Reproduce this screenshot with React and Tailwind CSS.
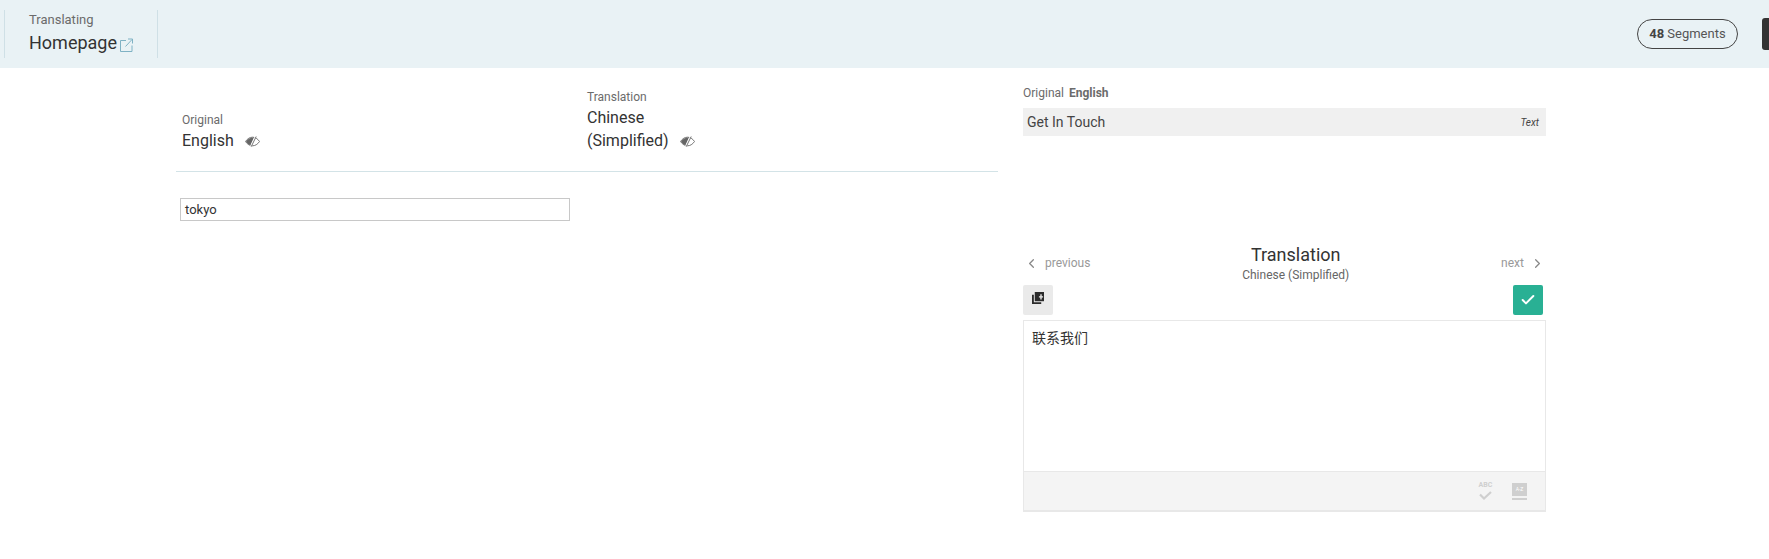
import React from "react";
import { Check, ChevronLeft, ChevronRight } from "lucide-react";

const font = { fontFamily: 'Roboto, "Noto Sans CJK SC", sans-serif' };

function ExternalIcon() {
  return (
    <svg width="13" height="14" viewBox="0 0 13 14" fill="none" stroke="#7fb2c4" strokeWidth="1" className="ml-[3px] mt-[4px]">
      <path d="M6 2.5H0.5V13.5H12V7.5" />
      <path d="M5.5 8.5L12 1.5M8 1H12.5V5.5" />
    </svg>
  );
}

function EyeIcon() {
  return (
    <svg width="15" height="11" viewBox="0 0 15 11" className="ml-[11px] mt-[1px]">
      <path d="M0.5 5.5C2.5 2.5 5 1.2 7.5 1.2C10 1.2 12.5 2.5 14.5 5.5C12.5 8.5 10 9.8 7.5 9.8C5 9.8 2.5 8.5 0.5 5.5Z" fill="none" stroke="#777" strokeWidth="1" />
      <path d="M1 5.5C3 2.8 5.5 1.5 9 1.6L5.5 9.3C3.8 8.7 2.3 7.4 1 5.5Z" fill="#666" />
      <path d="M10.5 0.3L5.5 10.7" stroke="#fff" strokeWidth="1.2" />
      <path d="M11.2 0.5L6.2 10.7" stroke="#777" strokeWidth="1" />
    </svg>
  );
}

function CopyIcon() {
  return (
    <svg width="12" height="12" viewBox="0 0 13 13" className="mt-[-4px]">
      <path d="M0 3H2V11H10V13H0Z" fill="#2b2b2b" />
      <path d="M3 0H13V10H3Z" fill="#2b2b2b" />
      <path d="M7.5 4.5H9V2.5H10.5V4.5H12V6H10.5V8H9V6H7.5Z" fill="#eaeaea" />
    </svg>
  );
}

function SpellIcon() {
  return (
    <div className="flex w-[15px] flex-col items-center text-[#cfcfcf]">
      <span className="text-[7px] font-bold leading-[7px]">ABC</span>
      <svg width="13" height="9" viewBox="0 0 13 9" fill="none" stroke="#cfcfcf" strokeWidth="2.2" className="mt-[2px]">
        <path d="M1 3.5L5 7.5L12 1" />
      </svg>
    </div>
  );
}

function DictIcon() {
  return (
    <div className="flex h-[17px] w-[15px] flex-col bg-[#cfcfcf]">
      <span className="h-[12px] text-center text-[5px] leading-[12px] text-white">A-Z</span>
      <span className="mt-[1px] h-[2px] bg-[#f3f3f3]" />
    </div>
  );
}

export default function App() {
  return (
    <div style={font} className="h-[559px] w-[1769px] overflow-hidden bg-white text-[#333]">
      <header className="flex h-[68px] items-center justify-between bg-[#e9f2f5]">
        <div className="ml-[4px] flex h-[48px] w-[154px] flex-col border-x border-[#cfe0e6] pl-[24px]">
          <span className="text-[13px] leading-[20px] text-[#6b6b6b]">Translating</span>
          <div className="mt-[1px] flex items-center">
            <span className="text-[18px] font-[450] leading-[24px] text-[#333]">Homepage</span>
            <ExternalIcon />
          </div>
        </div>
        <div className="flex items-center">
          <div className="flex h-[30px] w-[101px] items-center justify-center rounded-full border border-[#444] text-[13px] text-[#555]">
            <b className="mr-[3px] font-bold text-[#444]">48</b>Segments
          </div>
          <div className="ml-[24px] h-[32px] w-[7px] rounded-l-[3px] bg-[#333]" />
        </div>
      </header>

      <main className="flex items-start pl-[176px]">
        <section className="w-[822px]">
          <div className="flex h-[104px] items-end border-b border-[#d3e3e7] pb-[19px]">
            <div className="w-[405px] pl-[6px]">
              <div className="text-[12px] leading-[16px] text-[#6b6b6b]">Original</div>
              <div className="mt-[1px] flex items-center text-[16px] font-[450] leading-[23px] text-[#333]">
                English
                <EyeIcon />
              </div>
            </div>
            <div className="w-[405px] pl-[6px]">
              <div className="text-[12px] leading-[16px] text-[#6b6b6b]">Translation</div>
              <div className="mt-[1px] text-[16px] font-[450] leading-[23px] text-[#333]">Chinese</div>
              <div className="flex items-center text-[16px] font-[450] leading-[23px] text-[#333]">
                (Simplified)
                <EyeIcon />
              </div>
            </div>
          </div>
          <div className="pl-[4px] pt-[26px]">
            <div className="flex h-[23px] w-[390px] items-center border border-[#c8c8c8] pl-[4px] text-[13px] text-[#333]">
              tokyo
            </div>
          </div>
        </section>

        <section className="ml-[25px] w-[523px]">
          <div className="flex h-[40px] items-end pb-[7px] text-[12px] leading-[16px] text-[#6b6b6b]">
            Original<b className="ml-[5px] font-bold">English</b>
          </div>
          <div className="flex h-[28px] items-center justify-between bg-[#f0f0f0] pl-[4px] pr-[7px]">
            <span className="text-[14px] text-[#444]">Get In Touch</span>
            <span className="text-[10px] italic text-[#444]">Text</span>
          </div>

          <div className="mt-[108px] flex h-[41px] items-start justify-between">
            <div className="mt-[10px] flex items-center text-[12px] text-[#999]">
              <ChevronLeft size={15} strokeWidth={2} className="ml-[1px] text-[#888]" />
              <span className="ml-[6px]">previous</span>
            </div>
            <div className="flex flex-col items-center">
              <span className="text-[18px] leading-[22px] text-[#333]">Translation</span>
              <span className="text-[12px] leading-[18px] text-[#666]">Chinese (Simplified)</span>
            </div>
            <div className="mt-[10px] flex items-center text-[12px] text-[#999]">
              <span>next</span>
              <ChevronRight size={15} strokeWidth={2} className="ml-[6px] mr-[1px] text-[#888]" />
            </div>
          </div>

          <div className="flex h-[30px] items-center justify-between pr-[3px]">
            <div className="flex h-[30px] w-[30px] items-center justify-center rounded-[2px] bg-[#eaeaea]">
              <CopyIcon />
            </div>
            <div className="flex h-[30px] w-[30px] items-center justify-center rounded-[2px] bg-[#29b094]">
              <Check size={16} strokeWidth={3} className="text-white" />
            </div>
          </div>

          <div className="mt-[5px] border border-b-2 border-[#e8e8e8]">
            <div className="h-[150px] px-[8px] py-[8px] text-[14px] leading-[18px] text-[#333]">联系我们</div>
            <div className="flex h-[39px] items-center justify-end gap-[19px] border-t border-[#e8e8e8] bg-[#f4f4f4] pr-[18px]">
              <SpellIcon />
              <DictIcon />
            </div>
          </div>
        </section>
      </main>
    </div>
  );
}
